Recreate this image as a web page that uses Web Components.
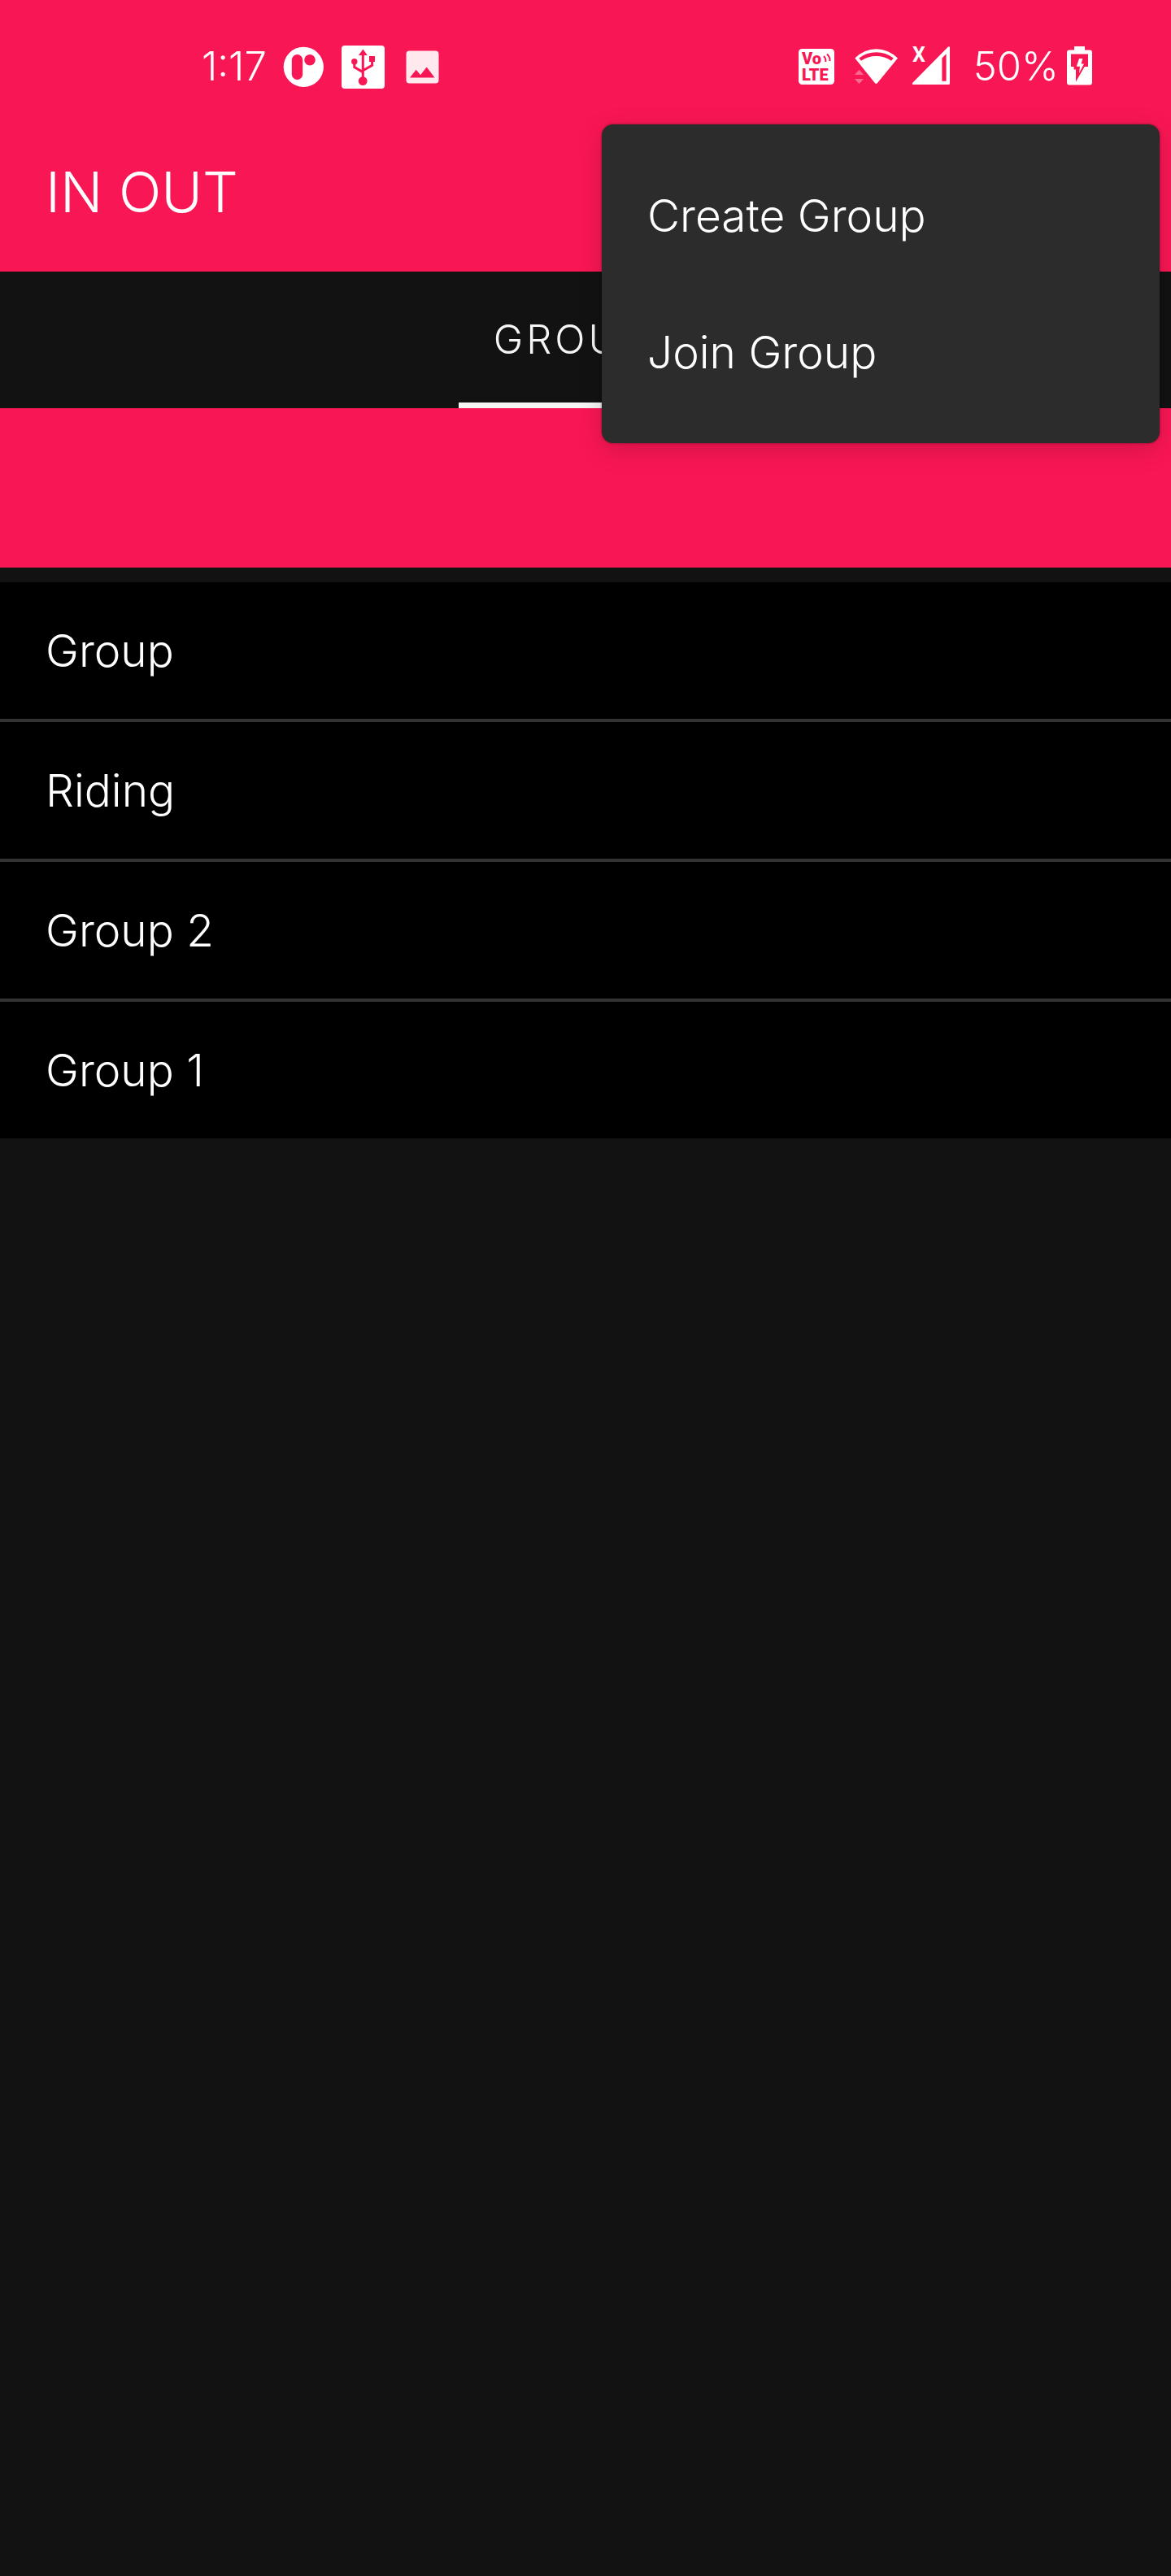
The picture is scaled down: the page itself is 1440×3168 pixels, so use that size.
<!DOCTYPE html>
<html lang="en">
<head>
<meta charset="utf-8">
<meta name="viewport" content="width=device-width, initial-scale=1">
<title>IN OUT</title>
<style>
  html { background: #121212; }
  body {
    margin: 0;
    min-height: 100vh;
    font-family: Inter, Roboto, sans-serif;
    font-weight: 300;
    color: #fff;
    --accent: #f91654;
    --surface: #121212;
    --gutter: 56px;
    --row: 168px;
  }
</style>
</head>
<body>
<in-out-app>
  <status-bar slot="status" time="1:17" battery="50%"></status-bar>
  <app-bar slot="bar">IN OUT</app-bar>
  <tab-strip slot="tabs">Groups</tab-strip>
  <group-list>
    <group-row>Group</group-row>
    <group-row>Riding</group-row>
    <group-row>Group 2</group-row>
    <group-row>Group 1</group-row>
  </group-list>
  <popup-menu slot="menu">
    <menu-option>Create Group</menu-option>
    <menu-option>Join Group</menu-option>
  </popup-menu>
</in-out-app>

<script>
const define = (name, html, setup) => {
  const template = document.createElement('template');
  template.innerHTML = html;
  customElements.define(name, class extends HTMLElement {
    constructor() {
      super();
      this.attachShadow({ mode: 'open' }).append(template.content.cloneNode(true));
    }
    connectedCallback() { if (setup) setup(this, this.shadowRoot); }
  });
};

/* Each glyph: [width, viewBox, markup] */
const glyphs = {
  logo: [52, '348 55 52 54', `
    <circle cx="373.3" cy="82.3" r="24.6" fill="#fff"/>
    <rect x="358.8" y="67" width="13.4" height="31" rx="6.7" fill="var(--accent)"/>
    <circle cx="381" cy="73.7" r="6.8" fill="var(--accent)"/>`],
  usb: [56, '420 55 56 54', `
    <rect x="420" y="56" width="53" height="53" rx="4" fill="#fff"/>
    <g fill="var(--accent)">
      <path d="M446.4 60.500l5.400 7.500h-10.800z"/>
      <circle cx="446.2" cy="99.6" r="5.4"/>
      <circle cx="435.8" cy="75.8" r="3.7"/>
      <rect x="454" y="69" width="7" height="7"/>
    </g>
    <path d="M446.3 66v31M435.800 77v5.600l10.400 6M457.600 75v5.400l-11.200 6.400" fill="none" stroke="var(--accent)" stroke-width="3"/>`],
  picture: [48, '496 55 48 54', `
    <path fill="#fff" fill-opacity=".9" fill-rule="evenodd" d="M503.500 62.500h32a4 4 0 0 1 4 4v32a4 4 0 0 1-4 4h-32a4 4 0 0 1-4-4v-32a4 4 0 0 1 4-4zM504 95.500h30.500l-9.800-13-7.600 9.800-5.400-6.600z"/>`],
  volte: [56, '982 55 56 54', `
    <rect x="983" y="60" width="44" height="44" rx="4.500" fill="#fff"/>
    <g fill="var(--accent)" font-family="Roboto, sans-serif" font-weight="900" font-size="20">
      <text x="987" y="79">Vo</text>
      <text x="987" y="99">LTE</text>
    </g>
    <path d="M1014 69q3 3 2.200 7M1018 66.500q4 4 3.400 8.500" fill="none" stroke="var(--accent)" stroke-width="2"/>`],
  wifi: [64, '1048 55 64 54', `
    <path fill="#fff" fill-rule="evenodd" d="M1052.300 71.500Q1064 60.300 1078.500 60.300T1105 71.500L1080 102q-1.600 1.800-3.200 0zM1057.300 71.400L1060 74.800Q1068 69 1078.500 69T1097 74.800L1099.800 71.400Q1090 64.300 1078.500 64.300T1057.300 71.400z"/>
    <path fill="#fff" fill-opacity=".35" d="M1057.500 85.800l5.600 6.200h-11.200zM1057.500 103.200l5.600-6.200h-11.200z"/>`],
  signal: [66, '1122 55 66 54', `
    <path fill="#fff" fill-rule="evenodd" d="M1169 58.500v44a1.500 1.500 0 0 1-1.500 1.500h-43.500q-2-.5-.7-2.200L1167 57.600q1.800-1 2 .9zM1159.400 71.500v28.300h5.200v-33.500z"/>
    <text x="1123" y="76" font-family="Roboto, sans-serif" font-size="25" font-weight="700" fill="#fff">X</text>`],
  battery: [32, '1312 55 32 54', `
    <path fill="#fff" d="M1321 57h13v4.500h6a3 3 0 0 1 3 3v37a3 3 0 0 1-3 3h-25a3 3 0 0 1-3-3v-37a3 3 0 0 1 3-3h6z"/>
    <path fill="var(--accent)" d="M1317 66.500h21v15.500h-4.300l-10.700 18.500v-15h-2.400v-3.500h-3.600z"/>
    <path fill="#fff" d="M1327 72h4.400l-1.800 6.400h3.400l-6 11.600 1-8.200h-4.200z"/>`]
};

define('status-glyph', `
  <style>:host { display: block; flex: none; } svg { display: block; overflow: visible; }</style>
  <span></span>`,
  (host, root) => {
    const [width, box, art] = glyphs[host.getAttribute('name')];
    root.querySelector('span').innerHTML =
      `<svg width="${width}" height="54" viewBox="${box}" aria-hidden="true">${art}</svg>`;
  });

define('status-bar', `
  <style>
    :host { display: flex; justify-content: space-between; align-items: center; box-sizing: border-box;
      height: 138px; padding: 26px 96px 0 248px; background: var(--accent); font-size: 49px; line-height: 54px; }
    div { display: flex; align-items: center; }
    .left { gap: 20px; }
    .right { gap: 10px; }
  </style>
  <div class="left">
    <span class="time"></span>
    <status-glyph name="logo"></status-glyph>
    <status-glyph name="usb"></status-glyph>
    <status-glyph name="picture"></status-glyph>
  </div>
  <div class="right">
    <status-glyph name="volte"></status-glyph>
    <status-glyph name="wifi"></status-glyph>
    <status-glyph name="signal"></status-glyph>
    <span class="battery"></span>
    <status-glyph name="battery"></status-glyph>
  </div>`,
  (host, root) => {
    root.querySelector('.time').textContent = host.getAttribute('time');
    root.querySelector('.battery').textContent = host.getAttribute('battery');
  });

define('app-bar', `
  <style>
    :host { display: flex; align-items: center; height: 196px; padding: 0 var(--gutter); background: var(--accent); }
    h1 { margin: 0; font-size: 69px; line-height: 84px; font-weight: inherit; }
  </style>
  <h1><slot></slot></h1>`);

define('tab-strip', `
  <style>
    :host { display: flex; justify-content: center; height: var(--row); background: var(--surface); }
    button { box-sizing: border-box; min-width: 312px; padding: 7px 42px 0; border: 0; border-bottom: 7px solid #f5f5f5;
      background: none; color: #f5f5f5; font: inherit; font-size: 49px; line-height: 60px;
      letter-spacing: 4px; text-transform: uppercase; }
  </style>
  <button role="tab" aria-selected="true"><slot></slot></button>`);

define('group-list', `
  <style>
    :host { display: flex; flex-direction: column; gap: 4px; background: #333; }
  </style>
  <slot></slot>`);

define('group-row', `
  <style>
    :host { display: flex; height: var(--row); background: #000; }
    button { flex: 1; padding: 0 var(--gutter); border: 0; background: none; color: inherit;
      font: inherit; font-size: 55px; line-height: 66px; text-align: left; }
  </style>
  <button><slot></slot></button>`);

define('popup-menu', `
  <style>
    :host { display: flex; flex-direction: column; box-sizing: border-box; width: 686px; padding: 28px 0;
      border-radius: 14px; background: #2c2c2c; box-shadow: 0 8px 32px rgba(0, 0, 0, .16), 0 0 3px rgba(0, 0, 0, .4); }
  </style>
  <slot></slot>`);

define('menu-option', `
  <style>
    :host { display: flex; height: var(--row); }
    button { flex: 1; padding: 0 var(--gutter); border: 0; background: none; color: inherit;
      font: inherit; font-size: 55px; line-height: 66px; text-align: left; }
  </style>
  <button><slot></slot></button>`);

define('in-out-app', `
  <style>
    :host { display: block; position: relative; }
    .banner { height: 196px; margin-bottom: 18px; background: var(--accent); }
    .overlay { position: absolute; top: 153px; right: 14px; }
  </style>
  <header>
    <slot name="status"></slot>
    <slot name="bar"></slot>
    <slot name="tabs"></slot>
  </header>
  <div class="banner"></div>
  <main><slot></slot></main>
  <div class="overlay"><slot name="menu"></slot></div>`);
</script>
</body>
</html>
